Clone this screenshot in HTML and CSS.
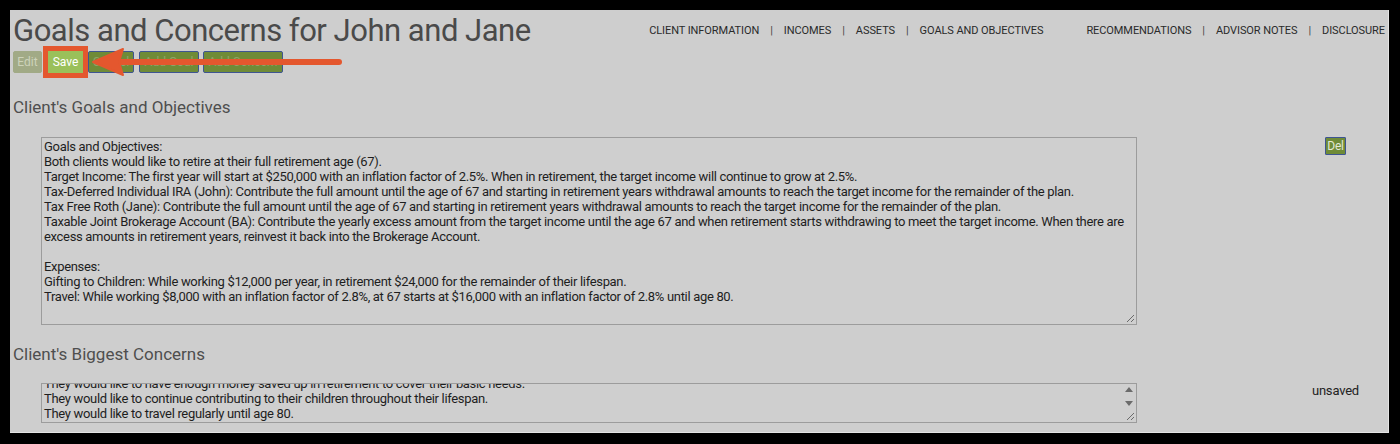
FILE: index.html
```html
<!DOCTYPE html>
<html>
<head>
<meta charset="utf-8">
<link rel="stylesheet" href="styles.css">
</head>
<body>
<div class="panel">
  <header class="top">
    <h1 class="title">Goals and Concerns for John and Jane</h1>
    <nav class="nav">
      <span>CLIENT INFORMATION</span><span class="sep">|</span>
      <span>INCOMES</span><span class="sep">|</span>
      <span>ASSETS</span><span class="sep">|</span>
      <span>GOALS AND OBJECTIVES</span><span class="gap"></span>
      <span>RECOMMENDATIONS</span><span class="sep">|</span>
      <span>ADVISOR NOTES</span><span class="sep">|</span>
      <span>DISCLOSURE</span>
    </nav>
  </header>
  <div class="toolbar">
    <button class="btn btn-edit">Edit</button>
    <button class="btn btn-save">Save</button>
    <button class="btn btn-dark w1">Cancel</button>
    <button class="btn btn-dark w2">Add Goal</button>
    <button class="btn btn-dark w3">Add Concern</button>
    <svg class="arrow" width="260" height="30" viewBox="0 0 260 30">
      <path d="M30 15 L250 15" stroke="#e4572e" stroke-width="6" stroke-linecap="round"/>
      <path d="M4 15 L34 2 L30 15 L34 28 Z" fill="#e4572e" stroke="#e4572e" stroke-width="2" stroke-linejoin="round"/>
    </svg>
  </div>

  <h2 class="heading h-goals">Client's Goals and Objectives</h2>
  <div class="row row-goals">
    <div class="box box-goals">
      <div class="line">Goals and Objectives:</div>
      <div class="line">Both clients would like to retire at their full retirement age (67).</div>
      <div class="line">Target Income: The first year will start at $250,000 with an inflation factor of 2.5%. When in retirement, the target income will continue to grow at 2.5%.</div>
      <div class="line">Tax-Deferred Individual IRA (John): Contribute the full amount until the age of 67 and starting in retirement years withdrawal amounts to reach the target income for the remainder of the plan.</div>
      <div class="line">Tax Free Roth (Jane): Contribute the full amount until the age of 67 and starting in retirement years withdrawal amounts to reach the target income for the remainder of the plan.</div>
      <div class="line">Taxable Joint Brokerage Account (BA): Contribute the yearly excess amount from the target income until the age 67 and when retirement starts withdrawing to meet the target income. When there are</div>
      <div class="line">excess amounts in retirement years, reinvest it back into the Brokerage Account.</div>
      <div class="line">&nbsp;</div>
      <div class="line">Expenses:</div>
      <div class="line">Gifting to Children: While working $12,000 per year, in retirement $24,000 for the remainder of their lifespan.</div>
      <div class="line">Travel: While working $8,000 with an inflation factor of 2.8%, at 67 starts at $16,000 with an inflation factor of 2.8% until age 80.</div>
      <svg class="grip" width="10" height="10" viewBox="0 0 10 10"><path d="M9 2 L2 9 M9 6 L6 9" stroke="#6a6a6a" stroke-width="1"/></svg>
    </div>
    <div class="side"><button class="btn-del">Del</button></div>
  </div>

  <h2 class="heading h-concerns">Client's Biggest Concerns</h2>
  <div class="row row-concerns">
    <div class="box box-concerns">
      <div class="scroll">
        <div class="line">They would like to have enough money saved up in retirement to cover their basic needs.</div>
        <div class="line">They would like to continue contributing to their children throughout their lifespan.</div>
        <div class="line">They would like to travel regularly until age 80.</div>
      </div>
      <div class="sbar">
        <svg width="10" height="26" viewBox="0 0 10 26"><path d="M1 8 L5 3 L9 8 Z M1 17 L9 17 L5 22 Z" fill="#6b6b6b"/></svg>
      </div>
      <svg class="grip" width="10" height="10" viewBox="0 0 10 10"><path d="M9 2 L2 9 M9 6 L6 9" stroke="#6a6a6a" stroke-width="1"/></svg>
    </div>
    <div class="side side-status">unsaved</div>
  </div>
</div>
</body>
</html>
```
FILE: styles.css
```css
html, body {
  margin: 0;
  padding: 0;
  background: #000;
}
body {
  padding: 10px;
  font-family: Roboto, "Liberation Sans", sans-serif;
}
.panel {
  width: 1379px;
  height: 423px;
  box-sizing: border-box;
  background: #cecece;
  border-right: 1px solid #e4e4e4;
  border-bottom: 1px solid #e4e4e4;
  padding: 2px 3px 0 3px;
  overflow: hidden;
}
.top {
  display: flex;
  justify-content: space-between;
  align-items: flex-start;
}
.title {
  margin: 0;
  font-weight: 400;
  font-size: 31px;
  line-height: 38px;
  color: #4a4a4a;
  letter-spacing: -0.48px;
}
.nav {
  display: flex;
  align-items: center;
  margin-top: 12px;
  font-size: 11px;
  line-height: 13px;
  color: #2a2a2a;
  letter-spacing: -0.08px;
}
.nav .sep {
  margin: 0 11px;
  color: #444;
}
.nav .gap {
  width: 43px;
}
.toolbar {
  position: relative;
  display: flex;
  align-items: center;
  gap: 5px;
  margin-top: 1px;
  height: 22px;
}
.btn {
  height: 22px;
  border: 1px solid transparent;
  border-radius: 2px;
  padding: 0;
  font-family: Roboto, "Liberation Sans", sans-serif;
  font-size: 12px;
  line-height: 20px;
  white-space: nowrap;
  overflow: hidden;
}
.btn-edit {
  width: 29px;
  background: #a1aa86;
  color: #cdd3ba;
  border-color: #a1aa86;
}
.btn-save {
  width: 35px;
  margin-left: 1px;
  border-radius: 0;
  background: #9ac05a;
  color: #fff;
  border-color: #9ac05a;
  box-shadow: 0 0 0 5px #e4572e;
}
.btn-dark {
  background: #6f8b37;
  border-color: #3e5592;
  color: #8fa46a;
}
.w1 { width: 46px; }
.w2 { width: 60px; }
.w3 { width: 80px; margin-left: -1px; }
.arrow {
  position: absolute;
  left: 76px;
  top: -4px;
}
.heading {
  margin: 0;
  font-weight: 400;
  font-size: 17px;
  line-height: 20px;
  color: #4e4e4e;
}
.h-goals {
  margin-top: 24px;
}
.h-concerns {
  margin-top: 19px;
}
.row {
  display: flex;
  align-items: flex-start;
}
.row-goals {
  margin-top: 20px;
}
.row-concerns {
  margin-top: 19px;
}
.box {
  position: relative;
  width: 1096px;
  box-sizing: border-box;
  margin-left: 28px;
  border: 1px solid #9c9c9c;
  background: #cfcfcf;
  font-size: 13px;
  line-height: 15px;
  color: #1e1e1e;
  letter-spacing: -0.32px;
  overflow: hidden;
}
.box-goals {
  height: 188px;
  padding: 1px 2px 0 2px;
}
.line {
  white-space: nowrap;
}
.grip {
  position: absolute;
  right: 1px;
  bottom: 1px;
}
.side {
  flex: 1;
  display: flex;
  justify-content: flex-end;
  padding-right: 39px;
}
.btn-del {
  height: 18px;
  width: 21px;
  padding: 0;
  border: 1px solid #3e5592;
  border-radius: 1px;
  background: #6f8b37;
  color: #e3e8d6;
  font-family: Roboto, "Liberation Sans", sans-serif;
  font-size: 12px;
  line-height: 16px;
  letter-spacing: -0.3px;
}
.box-concerns {
  height: 40px;
  padding: 0 2px;
}
.scroll {
  margin-top: -8px;
}
.sbar {
  position: absolute;
  right: 0;
  top: 0;
  width: 14px;
  height: 38px;
  display: flex;
  justify-content: center;
}
.side-status {
  font-size: 13px;
  line-height: 15px;
  color: #222;
  letter-spacing: -0.2px;
  padding-right: 26px;
  padding-top: 0;
}
```
